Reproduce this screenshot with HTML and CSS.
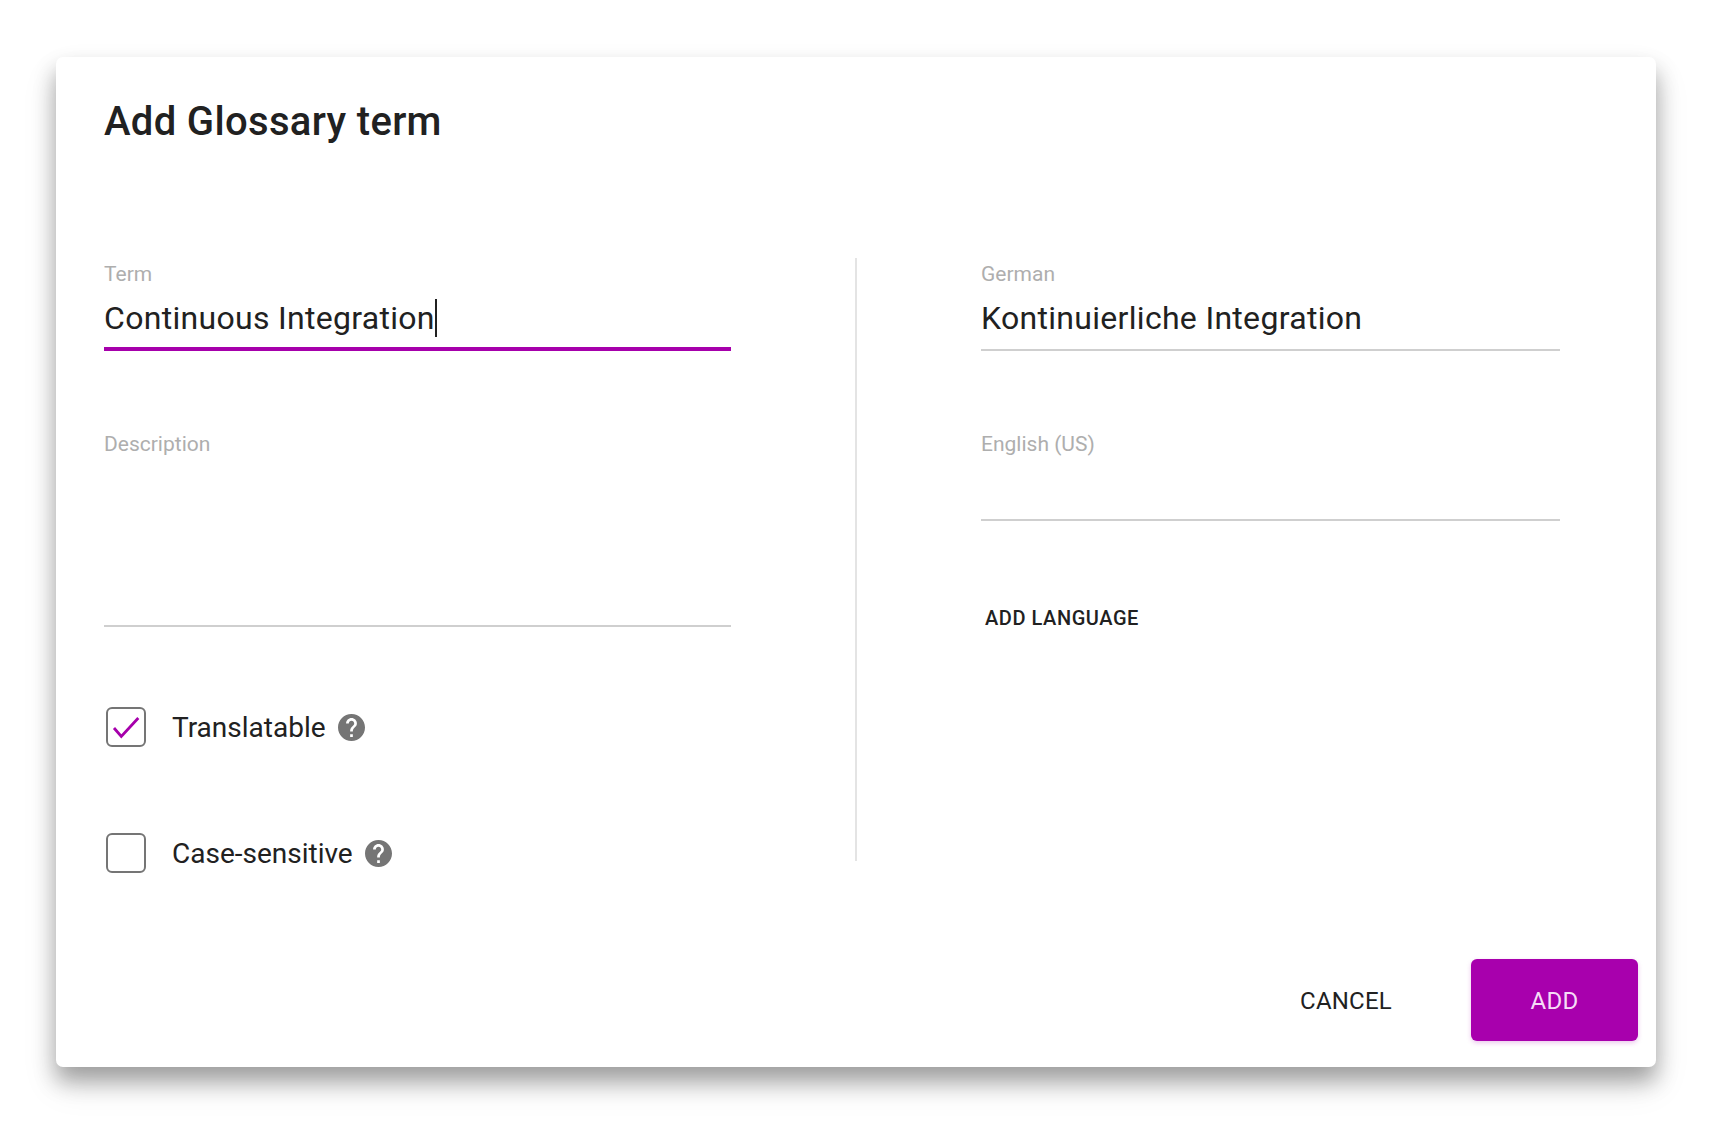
FILE: index.html
```
<!DOCTYPE html>
<html lang="en">
<head>
<meta charset="utf-8">
<title>Add Glossary term</title>
<link rel="stylesheet" href="styles.css">
</head>
<body>
<div class="dialog">
  <h1 class="title">Add Glossary term</h1>
  <div class="columns">
    <div class="col col-left">
      <div class="field">
        <div class="label">Term</div>
        <div class="value active"><span>Continuous Integration</span><span class="caret"></span></div>
      </div>
      <div class="field field-description">
        <div class="label">Description</div>
        <div class="value tall"></div>
      </div>
      <div class="check-row">
        <span class="box">
          <svg viewBox="0 0 40 40" width="40" height="40"><path class="tick" d="M7 20L14.3 28.4L31.3 10"/></svg>
        </span>
        <span class="check-label">Translatable</span>
        <svg class="help" viewBox="2 2 20 20" width="27" height="27"><path d="M12 2C6.48 2 2 6.48 2 12s4.48 10 10 10 10-4.48 10-10S17.52 2 12 2zm1 17h-2v-2h2v2zm2.07-7.75l-.9.92C13.45 12.9 13 13.5 13 15h-2v-.5c0-1.1.45-2.1 1.17-2.83l1.24-1.26c.37-.36.59-.86.59-1.41 0-1.1-.9-2-2-2s-2 .9-2 2H8c0-2.21 1.79-4 4-4s4 1.79 4 4c0 .88-.36 1.68-.93 2.25z"/></svg>
      </div>
      <div class="check-row">
        <span class="box"></span>
        <span class="check-label">Case-sensitive</span>
        <svg class="help" viewBox="2 2 20 20" width="27" height="27"><path d="M12 2C6.48 2 2 6.48 2 12s4.48 10 10 10 10-4.48 10-10S17.52 2 12 2zm1 17h-2v-2h2v2zm2.07-7.75l-.9.92C13.45 12.9 13 13.5 13 15h-2v-.5c0-1.1.45-2.1 1.17-2.83l1.24-1.26c.37-.36.59-.86.59-1.41 0-1.1-.9-2-2-2s-2 .9-2 2H8c0-2.21 1.79-4 4-4s4 1.79 4 4c0 .88-.36 1.68-.93 2.25z"/></svg>
      </div>
    </div>
    <div class="col col-right">
      <div class="field">
        <div class="label">German</div>
        <div class="value">Kontinuierliche Integration</div>
      </div>
      <div class="field">
        <div class="label">English (US)</div>
        <div class="value"></div>
      </div>
      <button class="add-language" type="button">ADD LANGUAGE</button>
    </div>
  </div>
  <div class="actions">
    <button class="btn btn-text" type="button">CANCEL</button>
    <button class="btn btn-primary" type="button">ADD</button>
  </div>
</div>
</body>
</html>
```
FILE: styles.css
```
* { box-sizing: border-box; }
html, body { margin: 0; background: #fff; }
body {
  padding: 57px 58px 0 56px;
  height: 1138px;
  overflow: hidden;
  font-family: Roboto, "Liberation Sans", sans-serif;
  color: #212121;
}
.dialog {
  width: 1600px;
  height: 1010px;
  background: #fff;
  border-radius: 7px;
  box-shadow: 0 14px 22px rgba(0,0,0,.32), 0 18px 36px rgba(0,0,0,.1);
  padding: 39px 0 0 48px;
  display: flex;
  flex-direction: column;
}
.title {
  margin: 0;
  height: 52px;
  font-size: 40px;
  line-height: 52px;
  font-weight: 500;
  letter-spacing: 0.33px;
}
.columns {
  margin-top: 110px;
  display: flex;
  height: 603px;
}
.col-left {
  width: 753px;
  padding-right: 124px;
  border-right: 2px solid #e4e4e4;
}
.col-right {
  padding-left: 124px;
  width: 703px;
}
.field { margin-bottom: 81px; }
.field-description { margin-bottom: 80px; }
.label {
  margin-top: 4px;
  height: 24px;
  font-size: 21px;
  line-height: 24px;
  color: #aeaeae;
}
.value {
  margin-top: 8px;
  height: 57px;
  padding-bottom: 7px;
  font-size: 32px;
  line-height: 48px;
  letter-spacing: 0.3px;
  border-bottom: 2px solid #cfcfcf;
  display: flex;
  align-items: center;
}
.value.active { border-bottom: 4px solid #a600ab; padding-bottom: 5px; }
.value.tall { height: 163px; }
.caret {
  width: 2px;
  height: 38px;
  background: #212121;
}
.check-row {
  display: flex;
  align-items: center;
  height: 40px;
  margin-bottom: 86px;
  padding-left: 2px;
}
.box {
  width: 40px;
  height: 40px;
  border: 2px solid #757575;
  border-radius: 6px;
  display: block;
  overflow: hidden;
}
.box svg { display: block; margin: -1px 0 0 -1px; }
.tick { fill: none; stroke: #a600ab; stroke-width: 2.8; }
.check-label {
  margin-left: 26px;
  font-size: 28px;
}
.help { margin-left: 12px; flex: none; fill: #757575; }
.add-language {
  display: block;
  margin: 85px 0 0 4px;
  padding: 0;
  background: none;
  border: 0;
  color: #212121;
  font: 500 20px/24px Roboto, "Liberation Sans", sans-serif;
  letter-spacing: 0.55px;
}
.actions {
  margin-top: 98px;
  display: flex;
  justify-content: flex-end;
  padding-right: 18px;
}
.btn {
  height: 82px;
  border: 0;
  border-radius: 6px;
  font: 400 24px/82px Roboto, "Liberation Sans", sans-serif;
  letter-spacing: 0.2px;
  padding: 1px 0 0;
}
.btn-text { background: none; color: #212121; width: 182px; margin-right: 34px; }
.btn-primary {
  width: 167px;
  background: #a800ad;
  color: #f6dcf7;
  box-shadow: 0 2px 5px rgba(168,0,173,.22);
}
```
